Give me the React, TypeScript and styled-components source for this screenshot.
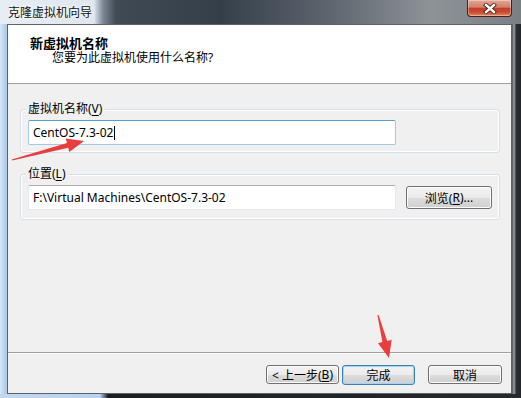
import React from 'react';
import styled, { createGlobalStyle } from 'styled-components';

const GlobalStyle = createGlobalStyle`
  html, body {
    margin: 0;
    padding: 0;
    background: #000;
  }
  body {
    font-family: "Noto Sans", "Noto Sans CJK SC", sans-serif;
    font-size: 12px;
    color: #000;
  }
`;

const Window = styled.div`
  position: relative;
  width: 521px;
  height: 398px;
  display: grid;
  grid-template-columns: 7px 505px 9px;
  grid-template-rows: 24px 370px 4px;
  overflow: hidden;
`;

const TitleBar = styled.div`
  grid-column: 1 / 4;
  display: flex;
  align-items: flex-start;
  justify-content: space-between;
  background: linear-gradient(
    90deg,
    #e6edf4 0px,
    #dfe6ee 94px,
    #7d8894 103px,
    #404a55 116px,
    #353f4a 220px,
    #5d656e 330px,
    #8e9398 430px,
    #7a7f85 521px
  );
`;

const Title = styled.div`
  padding-left: 8px;
  line-height: 23px;
  font-size: 12px;
  font-family: "Noto Sans CJK SC", sans-serif;
  color: #111;
  text-shadow: 0 0 6px #fff, 0 0 3px #fff;
`;

const CloseButton = styled.div`
  width: 43px;
  height: 16px;
  margin-right: 9px;
  display: flex;
  align-items: center;
  justify-content: center;
  border: 1px solid #4a1f18;
  border-top: none;
  border-radius: 0 0 4px 4px;
  background: linear-gradient(
    #e3a797 0%,
    #d47d69 45%,
    #c23f29 52%,
    #c9492f 75%,
    #e08a62 100%
  );
  box-shadow: inset 0 0 0 1px rgba(255, 255, 255, 0.35);
`;

const LeftFrame = styled.div`
  background: linear-gradient(90deg, #d9e7f5 0, #c3d8ef 3px, #a9c6e8 7px);
`;

const RightFrame = styled.div`
  background: linear-gradient(90deg, #3a3e43 0, #8a8f94 1px, #7d8287 3px, #2b2f34 4px, #23272c 9px);
`;

const BottomFrame = styled.div`
  grid-column: 1 / 4;
  background: linear-gradient(90deg, #c2d8ef 0, #b9d1ec 100px, #1b1e22 108px, #25282c 521px);
`;

const Client = styled.div`
  display: flex;
  flex-direction: column;
  border: 1px solid #5f6368;
  background: #f0f0f0;
`;

const Header = styled.div`
  height: 59px;
  box-sizing: border-box;
  padding: 10px 0 0 22px;
  background: #fff;
  border-bottom: 1px solid #a0a0a0;
`;

const HeaderTitle = styled.div`
  font-size: 13px;
  font-weight: bold;
  line-height: 15px;
  font-family: "Noto Sans CJK SC", sans-serif;
`;

const HeaderSubtitle = styled.div`
  padding-left: 22px;
  font-size: 12px;
  line-height: 15px;
`;

const Body = styled.div`
  flex: 1;
  padding: 17px 11px 0 12px;
`;

const Group = styled.fieldset<{ $gap?: number; $bottom?: number }>`
  margin: ${(p) => p.$gap ?? 0}px 0 0 0;
  padding: 3px 7px ${(p) => p.$bottom ?? 7}px 7px;
  border: 1px solid #d5dfe5;
  border-radius: 3px;
  box-shadow: inset 0 0 0 1px #fff;
  min-inline-size: 0;
`;

const Legend = styled.legend`
  padding: 0 2px;
  margin-left: -2px;
  line-height: 16px;
  font-size: 12px;
  background: #f0f0f0;
`;

const Row = styled.div`
  display: flex;
  align-items: center;
  gap: 10px;
`;

const TextBox = styled.div<{ $focused?: boolean }>`
  width: 368px;
  height: 25px;
  box-sizing: border-box;
  display: flex;
  align-items: center;
  padding-left: 4px;
  background: #fff;
  border: 1px solid ${(p) => (p.$focused ? '#a4c9e3' : '#e3e9ef')};
  border-top-color: ${(p) => (p.$focused ? '#5b9bd0' : '#abadb3')};
  border-radius: 2px;
  font-size: 12px;
  white-space: nowrap;
`;

const Caret = styled.span`
  display: inline-block;
  width: 1px;
  height: 14px;
  margin-left: 1px;
  background: #000;
`;

const Key = styled.span`
  text-decoration: underline;
  text-underline-offset: 2px;
`;

const Button = styled.div<{ $width: number; $height: number; $default?: boolean }>`
  width: ${(p) => p.$width}px;
  height: ${(p) => p.$height}px;
  box-sizing: border-box;
  display: flex;
  align-items: center;
  justify-content: center;
  font-size: 12px;
  border: 1px solid ${(p) => (p.$default ? '#3c7fb1' : '#707070')};
  border-radius: 3px;
  background: linear-gradient(#f3f3f3 0%, #ebebeb 50%, #dddddd 51%, #cfcfcf 100%);
  box-shadow: inset 0 0 0 1px ${(p) => (p.$default ? '#9fd6f5' : '#fcfcfc')};
  white-space: nowrap;
`;

const Footer = styled.div`
  height: 41px;
  box-sizing: border-box;
  display: flex;
  justify-content: flex-end;
  align-items: flex-start;
  gap: 3px;
  padding: 12px 9px 0 0;
  border-top: 1px solid #a0a0a0;
  box-shadow: inset 0 1px 0 #fff;
`;

const Spacer = styled.div`
  width: 7px;
`;

const Overlay = styled.svg`
  position: absolute;
  left: 0;
  top: 0;
  pointer-events: none;
`;

const arrowPoints = (
  tail: [number, number],
  tip: [number, number],
  head = 17,
  barb = 7,
  shaft = 2.5
) => {
  const dx = tip[0] - tail[0];
  const dy = tip[1] - tail[1];
  const len = Math.hypot(dx, dy);
  const ux = dx / len;
  const uy = dy / len;
  const px = -uy;
  const py = ux;
  const bx = tip[0] - ux * head;
  const by = tip[1] - uy * head;
  const pts = [
    [tail[0] + px * 0.6, tail[1] + py * 0.6],
    [bx + px * shaft, by + py * shaft],
    [bx + px * barb, by + py * barb],
    tip,
    [bx - px * barb, by - py * barb],
    [bx - px * shaft, by - py * shaft],
    [tail[0] - px * 0.6, tail[1] - py * 0.6],
  ];
  return pts.map((p) => `${p[0].toFixed(1)},${p[1].toFixed(1)}`).join(' ');
};

const App: React.FC = () => (
  <>
    <GlobalStyle />
    <Window>
      <TitleBar>
        <Title>克隆虚拟机向导</Title>
        <CloseButton>
          <svg width="14" height="11" viewBox="0 0 14 11">
            <path d="M3 2 L11 9 M11 2 L3 9" stroke="#3a1a14" strokeWidth="4" strokeLinecap="square" />
            <path d="M3 2 L11 9 M11 2 L3 9" stroke="#fff" strokeWidth="2.4" strokeLinecap="square" />
          </svg>
        </CloseButton>
      </TitleBar>
      <LeftFrame />
      <Client>
        <Header>
          <HeaderTitle>新虚拟机名称</HeaderTitle>
          <HeaderSubtitle>您要为此虚拟机使用什么名称?</HeaderSubtitle>
        </Header>
        <Body>
          <Group>
            <Legend>
              虚拟机名称(<Key>V</Key>)
            </Legend>
            <TextBox $focused>
              CentOS-7.3-02
              <Caret />
            </TextBox>
          </Group>
          <Group $gap={13} $bottom={9}>
            <Legend>
              位置(<Key>L</Key>)
            </Legend>
            <Row>
              <TextBox>F:\Virtual Machines\CentOS-7.3-02</TextBox>
              <Button $width={86} $height={23}>
                浏览(<Key>R</Key>)...
              </Button>
            </Row>
          </Group>
        </Body>
        <Footer>
          <Button $width={73} $height={19}>
            &lt; 上一步(<Key>B</Key>)
          </Button>
          <Button $width={73} $height={20} $default>
            完成
          </Button>
          <Spacer />
          <Button $width={74} $height={19}>
            取消
          </Button>
        </Footer>
      </Client>
      <RightFrame />
      <BottomFrame />
      <Overlay width="521" height="398" viewBox="0 0 521 398">
        <polygon points={arrowPoints([12, 160], [84, 141])} fill="#ea3d3d" />
        <polygon points={arrowPoints([378, 315], [389, 358])} fill="#ea3d3d" />
      </Overlay>
    </Window>
  </>
);

export default App;
